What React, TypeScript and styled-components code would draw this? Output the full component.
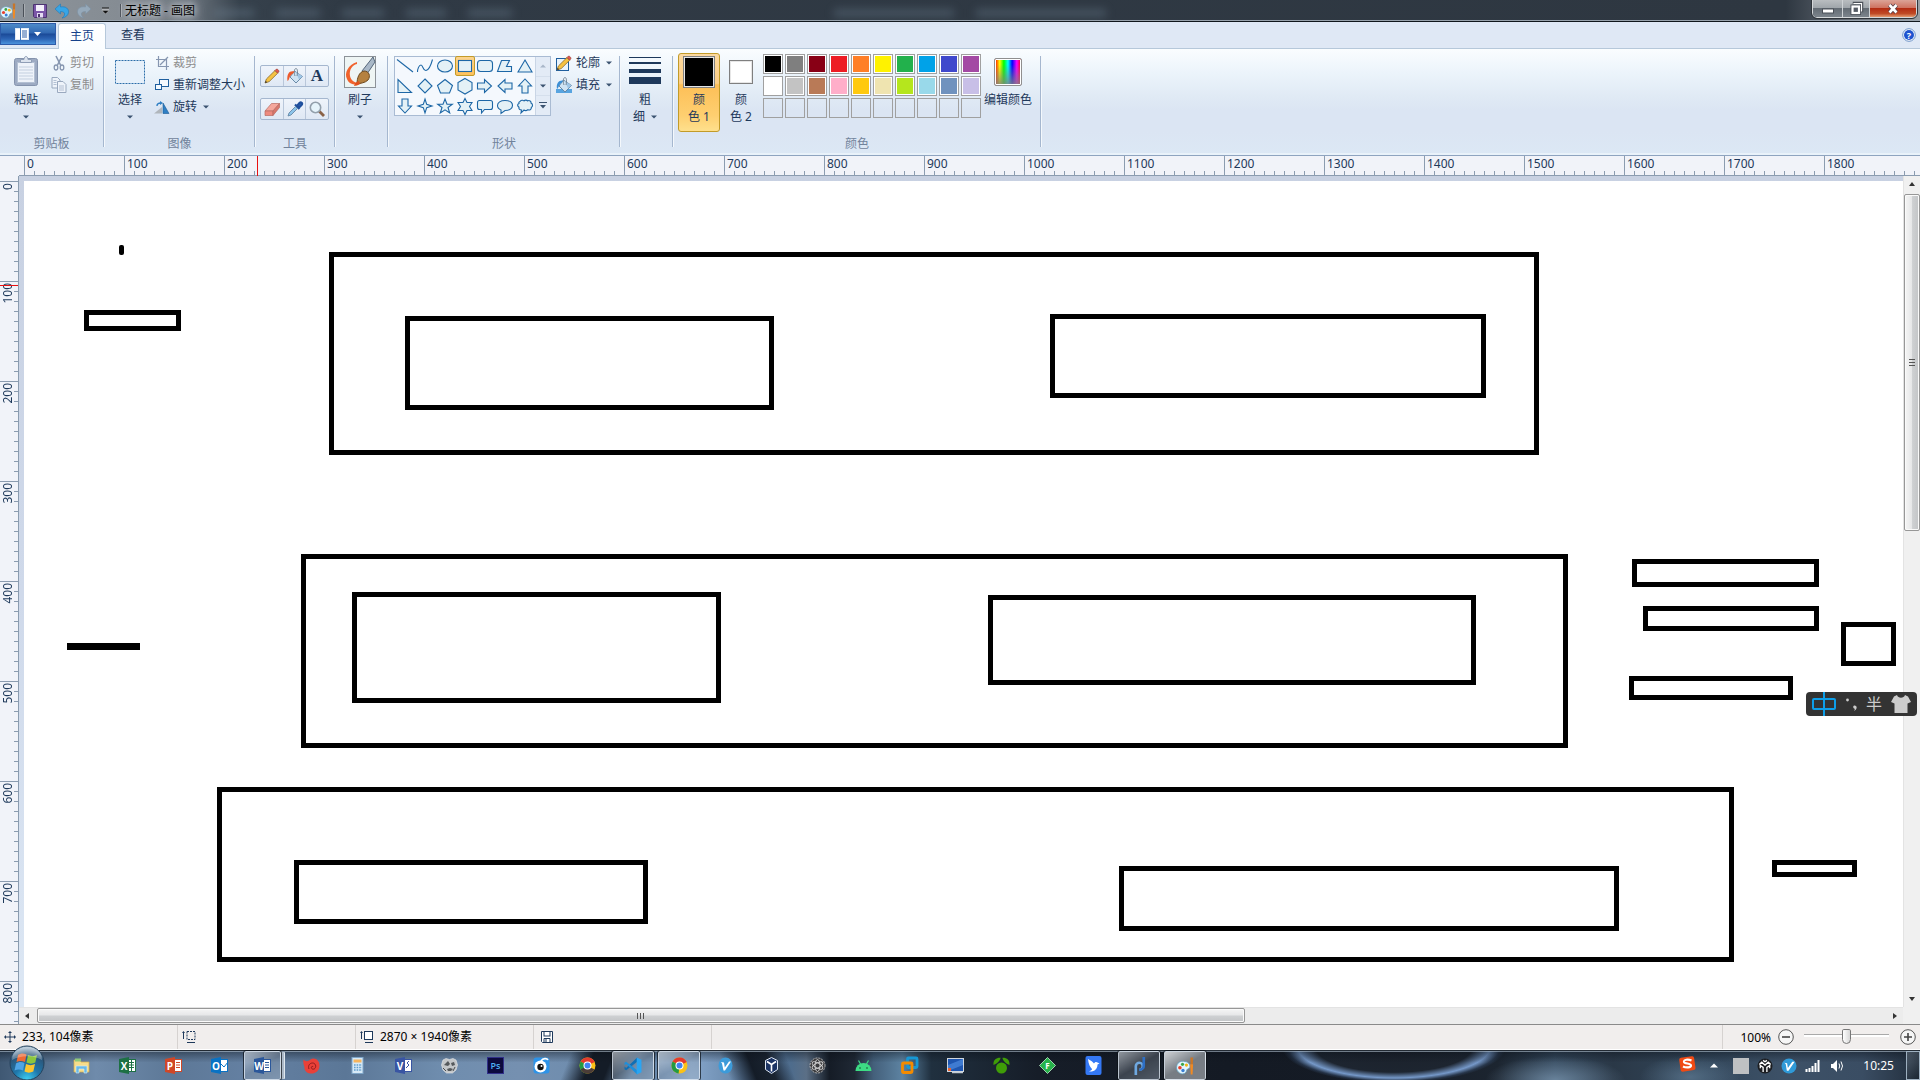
import React, { useEffect, useState } from "react";
import styled, { createGlobalStyle, css } from "styled-components";

const INK = "#1e395b";
const TICK = "#8b9cb0";

const GlobalStyle = createGlobalStyle`
  *, *::before, *::after { box-sizing: border-box; }
  body {
    margin: 0;
    overflow: hidden;
    font-family: "Noto Sans", "Noto Sans CJK SC", sans-serif;
    font-size: 12px;
    color: ${INK};
  }
  button { font: inherit; color: inherit; background: none; border: 0; padding: 0; margin: 0; }
  svg { display: block; flex: none; overflow: visible; }
`;

const Window = styled.div`
  position: relative;
  display: flex;
  flex-direction: column;
  height: 100vh;
  min-height: 480px;
`;

/* ---------- title bar ---------- */

const TitleBar = styled.header`
  position: relative;
  display: flex;
  justify-content: space-between;
  flex: none;
  height: 22px;
  border-bottom: 1px solid #10161c;
  box-shadow: inset 0 -1px 0 #98a2ac;
  background: linear-gradient(90deg, #8d949b 0, #858c93 120px, #6b747d 190px, #36414c 240px, #303a45 340px, #2e3741 93%, #6d747d 97%, #9a9fa4 100%);
`;

const QuickAccess = styled.div`
  display: flex;
  align-items: center;
  height: 21px;
  gap: 7px;
`;

const QuickButton = styled.button`
  display: flex;
  align-items: center;
  justify-content: center;
  width: 15px;
  height: 18px;
`;

const QuickDivider = styled.span`
  width: 2px;
  height: 13px;
  border-left: 1px solid #4a5058;
  border-right: 1px solid #a9aeb3;
`;

const Title = styled.h1`
  margin: 0 0 0 -4px;
  font-size: 12px;
  font-weight: 400;
  line-height: 20px;
  color: #000;
  text-shadow: 0 0 6px #d6dade, 0 0 10px #b9bfc5, 0 0 12px #b9bfc5;
`;

const Reflections = styled.div`
  position: absolute;
  inset: 9px 0 4px 0;
  display: flex;
  gap: 22px;
  padding-left: 214px;
  filter: blur(4px);
  pointer-events: none;
`;

const Reflection = styled.span<{ $w: number; $push?: number }>`
  width: ${(p) => p.$w}px;
  margin-left: ${(p) => p.$push || 0}px;
  background: rgba(126, 148, 170, 0.3);
`;

const Caption = styled.div`
  display: flex;
  height: 18px;
  margin-right: 3px;
  border: 1px solid #d5d8da;
  border-top: 0;
  border-radius: 0 0 5px 5px;
  overflow: hidden;
  outline: 1px solid #30353b;
`;

const CaptionButton = styled.button<{ $w: number; $close?: boolean }>`
  display: flex;
  align-items: center;
  justify-content: center;
  width: ${(p) => p.$w}px;
  border-left: 1px solid #cfd3d6;
  background: ${(p) =>
    p.$close
      ? "linear-gradient(#dba397 0, #cf7361 45%, #b32c13 50%, #c04a25 80%, #e39a70 100%)"
      : "linear-gradient(#b9bdc0 0, #a0a6ab 45%, #646c74 50%, #7c848c 100%)"};
  &:first-child { border-left: 0; }
`;

/* ---------- tabs ---------- */

const TabStrip = styled.nav`
  display: flex;
  align-items: flex-end;
  flex: none;
  height: 27px;
  background: #dfe8f5;
  border-bottom: 1px solid #b6c8da;
`;

const FileButton = styled.button`
  align-self: flex-start;
  display: flex;
  align-items: center;
  justify-content: center;
  gap: 5px;
  width: 56px;
  height: 22px;
  margin: 1px 2px 0 0;
  border: 1px solid #2d5ba9;
  background: linear-gradient(#4d8ac8 0, #3168b2 45%, #1b4a98 50%, #2c64b4 75%, #4b93dc 100%);
`;

const Tab = styled.button<{ $active?: boolean }>`
  width: ${(p) => (p.$active ? 48 : 54)}px;
  height: 25px;
  line-height: 22px;
  padding-bottom: 2px;
  ${(p) =>
    p.$active &&
    css`
      height: 26px;
      margin-bottom: -1px;
      color: #15428b;
      border: 1px solid #b6c8da;
      border-bottom: 0;
      border-radius: 3px 3px 0 0;
      background: linear-gradient(#fff, #fafdff);
    `}
`;

const HelpButton = styled.button`
  margin: 0 4px 6px auto;
`;

/* ---------- ribbon ---------- */

const Ribbon = styled.section`
  display: flex;
  flex: none;
  height: 107px;
  border-bottom: 1px solid #8ea4c0;
  background: linear-gradient(#fafdff 0, #ecf4fb 22%, #e0eaf5 45%, #dbe5f3 58%, #dbe5f3 78%, #dce8f5 100%);
  box-shadow: inset 0 -2px 0 #e9f2fa;
`;

const Group = styled.div<{ $w: number }>`
  display: flex;
  flex-direction: column;
  flex: none;
  width: ${(p) => p.$w}px;
`;

const GroupBody = styled.div<{ $pad?: number; $gap?: number }>`
  display: flex;
  flex: 1;
  align-items: flex-start;
  gap: ${(p) => p.$gap || 0}px;
  padding: 3px 0 0 ${(p) => p.$pad || 0}px;
`;

const GroupLabel = styled.div`
  height: 21px;
  line-height: 20px;
  text-align: center;
  color: #71839b;
`;

const Separator = styled.span`
  flex: none;
  width: 2px;
  margin: 7px 0 8px;
  border-left: 1px solid #a5b7cf;
  border-right: 1px solid #f4f8fc;
`;

const BigButton = styled.button<{ $w: number; $on?: boolean }>`
  display: flex;
  flex-direction: column;
  align-items: center;
  flex: none;
  width: ${(p) => p.$w}px;
  height: 79px;
  margin-top: 1px;
  padding-top: 2px;
  border: 1px solid transparent;
  border-radius: 3px;
  line-height: 17px;
  white-space: nowrap;
  ${(p) =>
    p.$on &&
    css`
      border-color: #c29b29;
      background: linear-gradient(#fcd9a0 0, #fdcf86 38%, #fdbf57 40%, #fecf70 80%, #fee08d 100%);
    `}
`;

const BigIcon = styled.span`
  display: flex;
  align-items: center;
  justify-content: center;
  height: 32px;
  margin-bottom: 3px;
`;

const BigCaption = styled.span`
  display: flex;
  align-items: center;
  justify-content: center;
  gap: 6px;
  height: 17px;
`;

const SmallColumn = styled.div`
  display: flex;
  flex-direction: column;
`;

const SmallButton = styled.button<{ $dim?: boolean }>`
  display: flex;
  align-items: center;
  gap: 4px;
  height: 22px;
  line-height: 22px;
  white-space: nowrap;
  color: ${(p) => (p.$dim ? "#8d8d8d" : INK)};
`;

const SmallIcon = styled.span<{ $wide?: boolean }>`
  display: flex;
  align-items: center;
  justify-content: center;
  width: ${(p) => (p.$wide ? 16 : 14)}px;
  height: 16px;
`;

const CaretBox = styled.span`
  margin-left: 2px;
`;

const ToolRows = styled.div`
  display: flex;
  flex-direction: column;
  gap: 11px;
  padding-top: 13px;
`;

const ToolRow = styled.div`
  display: flex;
  width: 69px;
  height: 22px;
  border: 1px solid #a5b7cf;
  border-radius: 2px;
  background: linear-gradient(#eff4fb, #dfe8f4);
`;

const ToolButton = styled.button`
  display: flex;
  flex: 1;
  align-items: center;
  justify-content: center;
  & + & { border-left: 1px solid #b9c7da; }
`;

const Gallery = styled.div`
  display: flex;
  width: 157px;
  height: 60px;
  margin: 4px 5px 0 0;
  border: 1px solid #a9bbd3;
  background: #f4f8fd;
`;

const ShapeGrid = styled.div`
  display: grid;
  grid-template-columns: repeat(7, 20px);
  grid-auto-rows: 20px;
  flex: 1;
  margin-top: -1px;
`;

const ShapeButton = styled.button<{ $on?: boolean }>`
  display: flex;
  align-items: center;
  justify-content: center;
  ${(p) =>
    p.$on &&
    css`
      border: 1px solid #c29b29;
      border-radius: 2px;
      background: linear-gradient(#fcd48d, #fdc15c);
    `}
`;

const GalleryScroll = styled.div`
  display: flex;
  flex-direction: column;
  width: 15px;
  border-left: 1px solid #c9d5e5;
  background: #e3ebf6;
`;

const GalleryScrollButton = styled.button`
  display: flex;
  flex: 1;
  align-items: center;
  justify-content: center;
  & + & { border-top: 1px solid #d5dfec; }
`;

const LineStack = styled.span`
  display: flex;
  flex-direction: column;
  justify-content: space-between;
  width: 32px;
  height: 27px;
  margin: 1px 0 7px;
`;

const LineSample = styled.span<{ $h: number }>`
  height: ${(p) => p.$h}px;
  background: ${INK};
`;

const CurrentColor = styled.span<{ $size: number; $color: string }>`
  width: ${(p) => p.$size}px;
  height: ${(p) => p.$size}px;
  border: 1px solid #7f7f7f;
  box-shadow: inset 0 0 0 1px #e6e6e6;
  background: ${(p) => p.$color};
`;

const Palette = styled.div`
  display: grid;
  grid-template-columns: repeat(10, 20px);
  grid-auto-rows: 20px;
  gap: 2px;
  padding: 2px 2px 0 1px;
`;

const Swatch = styled.button<{ $color?: string }>`
  border: 1px solid #a0a0a0;
  ${(p) =>
    p.$color &&
    css`
      background: ${p.$color};
      box-shadow: inset 0 0 0 1px #fff;
    `}
`;

const Rainbow = styled.span`
  width: 28px;
  height: 28px;
  border: 1px solid #8f8f8f;
  border-radius: 2px;
  box-shadow: inset 0 0 0 1px #fff;
  background: linear-gradient(rgba(128, 128, 128, 0) 20%, rgba(128, 128, 128, 0.85)),
    linear-gradient(90deg, #f00, #ff0 18%, #0f0 34%, #0ff 50%, #00f 66%, #f0f 84%, #f00);
`;

/* ---------- work area ---------- */

const Work = styled.main`
  display: grid;
  flex: 1;
  min-height: 0;
  grid-template-columns: 19px minmax(0, 1fr) 17px;
  grid-template-rows: 20px minmax(0, 1fr) 17px;
  background: #f0f0f0;
`;

const RulerX = styled.div`
  position: relative;
  grid-column: 1 / -1;
  display: flex;
  overflow: hidden;
  padding-left: 24px;
  background: linear-gradient(${TICK}, ${TICK}) 19px 100% / 100% 1px no-repeat, #f1f3f9;
`;

const SegmentX = styled.div`
  flex: 0 0 100px;
  padding-left: 3px;
  line-height: 16px;
  background:
    linear-gradient(${TICK}, ${TICK}) 0 0 / 1px 100% no-repeat,
    repeating-linear-gradient(90deg, ${TICK} 0 1px, transparent 1px 10px) 0 100% / 100% 5px no-repeat;
`;

const MarkerX = styled.span`
  position: absolute;
  left: 257px;
  top: 0;
  bottom: 0;
  width: 1px;
  background: #e81010;
`;

const RulerY = styled.div`
  position: relative;
  grid-row: 2 / 4;
  overflow: hidden;
  padding-top: 5px;
  border-right: 1px solid ${TICK};
  background: #f1f3f9;
`;

const SegmentY = styled.div`
  height: 100px;
  padding-top: 2px;
  background:
    linear-gradient(${TICK}, ${TICK}) 0 0 / 100% 1px no-repeat,
    repeating-linear-gradient(${TICK} 0 1px, transparent 1px 10px) 100% 0 / 4px 100% no-repeat;
`;

const LabelY = styled.span`
  display: block;
  width: 15px;
  line-height: 15px;
  writing-mode: vertical-rl;
  transform: rotate(180deg);
`;

const MarkerY = styled.span`
  position: absolute;
  top: 109px;
  left: 0;
  right: 0;
  height: 1px;
  background: #e81010;
`;

const Viewport = styled.div`
  overflow: hidden;
  padding: 5px 0 0 5px;
  background: linear-gradient(#c8d1e2, #cfd9ea 50%, #dce7f4);
`;

const Sheet = styled.div`
  position: relative;
  height: 100%;
  background: #fff;
`;

const Stroke = styled.div<{ $box: number[]; $fill?: boolean }>`
  position: absolute;
  left: ${(p) => p.$box[0] - 24}px;
  top: ${(p) => p.$box[1] - 181}px;
  width: ${(p) => p.$box[2] - p.$box[0]}px;
  height: ${(p) => p.$box[3] - p.$box[1]}px;
  border: ${(p) => (p.$fill ? 0 : 5)}px solid #000;
  background: ${(p) => (p.$fill ? "#000" : "transparent")};
`;

const Dot = styled(Stroke)`
  border-radius: 2px;
`;

const ScrollY = styled.div`
  display: flex;
  flex-direction: column;
  border-left: 1px solid #e3e3e3;
  background: #f0f0f0;
`;

const ScrollX = styled.div`
  display: flex;
  border-top: 1px solid #e3e3e3;
  background: #ececec;
`;

const ScrollArrow = styled.button`
  display: flex;
  align-items: center;
  justify-content: center;
  flex: 0 0 16px;
`;

const Track = styled.div<{ $row?: boolean }>`
  display: flex;
  flex: 1;
  flex-direction: ${(p) => (p.$row ? "row" : "column")};
  padding: ${(p) => (p.$row ? "0 0 0 2px" : "2px 0 0")};
`;

const Thumb = styled.div<{ $row?: boolean }>`
  display: flex;
  align-items: center;
  justify-content: center;
  border: 1px solid #979797;
  border-radius: 2px;
  box-shadow: inset 0 0 0 1px #fafafa;
  ${(p) =>
    p.$row
      ? css`
          width: 65.3%;
          height: 15px;
          background: linear-gradient(#f5f5f5 0, #e6e7e8 48%, #cfd1d3 52%, #c2c4c6 100%);
        `
      : css`
          height: 42.3%;
          background: linear-gradient(90deg, #f5f5f5 0, #e6e7e8 48%, #cfd1d3 52%, #c2c4c6 100%);
        `}
`;

/* ---------- status bar ---------- */

const StatusBar = styled.footer`
  display: flex;
  flex: none;
  height: 26px;
  border-top: 1px solid #8a8a8a;
  border-bottom: 1px solid #fff;
  background: #f1eeed;
  color: #000;
`;

const StatusCell = styled.div`
  display: flex;
  align-items: center;
  gap: 6px;
  width: 178px;
  padding-left: 4px;
  border-right: 1px solid #d6d2d0;
  line-height: 22px;
`;

const ZoomCell = styled.div`
  display: flex;
  align-items: center;
  gap: 7px;
  margin-left: auto;
  padding: 0 4px 0 17px;
  border-left: 1px solid #d6d2d0;
`;

const ZoomButton = styled.button`
  display: flex;
`;

const ZoomSlider = styled.input`
  appearance: none;
  width: 85px;
  height: 18px;
  margin: 0 4px 0 3px;
  background: linear-gradient(#a9a9a9, #a9a9a9) 0 6px / 100% 1px no-repeat,
    linear-gradient(#fff, #fff) 0 7px / 100% 2px no-repeat;
  &::-webkit-slider-thumb {
    appearance: none;
    width: 9px;
    height: 15px;
    margin-top: -2px;
    border: 1px solid #777;
    border-radius: 2px 2px 5px 5px;
    background: linear-gradient(90deg, #fff, #d8d8d8);
  }
`;

/* ---------- taskbar ---------- */

const Taskbar = styled.div`
  position: relative;
  display: flex;
  flex: none;
  height: 30px;
  border-top: 1px solid #222a33;
  box-shadow: inset 0 1px 0 rgba(190, 205, 220, 0.55);
  background:
    linear-gradient(rgba(10, 16, 24, 0.45), rgba(10, 16, 24, 0) 40%),
    radial-gradient(ellipse 112px 36px at 72.6% -4px, #1b212b 0, #1d2530 70%, #7598c8 86%, rgba(60, 85, 120, 0.4) 95%, transparent 100%),
    radial-gradient(ellipse 70px 24px at 81% 100%, rgba(122, 150, 176, 0.75), transparent),
    radial-gradient(ellipse 50px 22px at 88% 90%, rgba(104, 134, 160, 0.6), transparent),
    linear-gradient(112deg, transparent 29.600%, #141c27 30.800%, #141c27 31.800%, transparent 33.200%),
    linear-gradient(68deg, transparent 37.800%, #141c27 39.200%, #1a2431 40.200%, transparent 41.200%),
    linear-gradient(90deg,
      #3f5873 0, #6f8bab 5%, #5d7897 9%, #6480a2 13%, #5b7797 18%, #6f8dae 23%, #7590b0 27%,
      #6f8dae 30%, #5f7fa2 33.500%, #86a6cb 36%, #6d8db0 38%, #56769c 40%, #4e6c8c 41.200%, #5b6f86 42%,
      #151c26 43.200%, #1f2834 44.500%, #44607b 45.500%, #5d83a2 47%, #20303f 48.500%,
      #161d28 54%, #141a24 64%, #151b25 72%, #1c2530 78%, #33475b 81%,
      #2a3847 84%, #33475b 89%, #3d5167 93%, #3a4d63 97%, #222e3c 100%);
`;

const StartOrb = styled.button`
  position: relative;
  z-index: 1;
  width: 58px;
  height: 36px;
  margin-top: -6px;
  padding-left: 9px;
`;

const TaskList = styled.div`
  display: flex;
`;

const TaskButton = styled.button<{ $state?: "open" | "front" | "stack" }>`
  display: flex;
  align-items: center;
  justify-content: center;
  width: 42px;
  height: 29px;
  margin: 0 2px;
  ${(p) =>
    p.$state &&
    css`
      border: 1px solid rgba(225, 235, 245, 0.75);
      border-radius: 2px;
      outline: 1px solid rgba(10, 15, 22, 0.7);
      background: ${p.$state === "front"
        ? "linear-gradient(150deg, rgba(240,242,244,.85), rgba(160,166,172,.7) 50%, rgba(190,195,200,.6))"
        : "linear-gradient(150deg, rgba(230,236,242,.6), rgba(150,160,172,.3) 50%, rgba(170,185,200,.4))"};
    `}
  ${(p) =>
    p.$state === "stack" &&
    css`
      width: 37px;
      margin-right: 7px;
      box-shadow: 4px 0 0 -1px rgba(150, 165, 182, 0.7), 5px 0 0 -1px #dfe8f0;
    `}
`;

const Tray = styled.div`
  display: flex;
  align-items: center;
  gap: 8px;
  margin-left: auto;
`;

const TrayButton = styled.button<{ $w?: number }>`
  display: flex;
  align-items: center;
  justify-content: center;
  width: ${(p) => p.$w || 16}px;
  height: 29px;
`;

const Clock = styled.time`
  margin: 0 4px 0 10px;
  line-height: 28px;
  color: #fff;
`;

const ShowDesktop = styled.button`
  width: 14px;
  height: 29px;
  border: 1px solid #9eb0c0;
  background: linear-gradient(135deg, rgba(200, 215, 230, 0.25), rgba(20, 30, 40, 0.55));
`;

const InputBar = styled.aside`
  position: absolute;
  right: 3px;
  top: 692px;
  display: flex;
  align-items: center;
  gap: 9px;
  width: 111px;
  height: 24px;
  padding-left: 6px;
  border-radius: 4px;
  background: #333;
  color: #ccc;
`;

const HalfWidth = styled.span`
  font-size: 16px;
  line-height: 22px;
`;

/* ---------- drawings ---------- */

const Caret = ({ color = "#3b5370" }: { color?: string }) => (
  <svg width="6" height="4" viewBox="0 0 6 4"><path d="M0 0.5h6L3 3.5z" fill={color} /></svg>
);

const Arrow = ({ dir }: { dir: number }) => (
  <svg width="8" height="8" viewBox="0 0 8 8"><path d="M1 6L4 2l3 4z" fill="#333" transform={`rotate(${dir} 4 4)`} /></svg>
);

const PaintIcon = ({ size = 16 }: { size?: number }) => (
  <svg width={size} height={size} viewBox="0 0 16 16">
    <path d="M.5 9.500C.5 5 4 3 8 4c3.500.6 5 3 4.200 5.500-.7 1.200-2 .8-2.500 1.800C9.200 13.500 8 15 6 15 3 15 .5 12.500.5 9.500z" fill="#e3f5fd" stroke="#5f9dbb" strokeWidth=".7" />
    <circle cx="3.500" cy="9.500" r="1.600" fill="#e8412c" /><circle cx="5.800" cy="6.500" r="1.400" fill="#3ba64a" />
    <circle cx="9.300" cy="7.200" r="1.400" fill="#f2b517" /><circle cx="6.200" cy="12" r="1.500" fill="#3a7fd5" />
    <path d="M12.800 0.500l2.400 0-.2 6h-2z" fill="#c7762a" /><path d="M12.600 6.500h2.600l-.5 9h-1.600z" fill="#f08a24" />
  </svg>
);

const PencilShape = () => (
  <>
    <path d="M1 15l1.400-4L11 2.500l2.700 2.700L5.200 13.600z" fill="#f5c242" stroke="#8a6a2c" strokeWidth=".8" />
    <path d="M11 2.500l1.400-1.400c.8-.6 3.100 1.700 2.500 2.600L13.700 5.200z" fill="#e2574c" stroke="#92413a" strokeWidth=".6" />
    <path d="M1 15l.7-2.200 1.500 1.500z" fill="#333" />
  </>
);

const BucketShape = () => (
  <>
    <path d="M7.500 3L15.500 8.500 9 15 3 9z" fill="#cfe3f3" stroke="#5c7f9e" strokeWidth=".9" />
    <path d="M8.500 3.500L15.500 8.500 12 11.500z" fill="#9fc6e6" />
    <path d="M8 8C6.500 4 7.500.5 9 .500S11 4 10 8" fill="none" stroke="#6c7d8c" strokeWidth=".9" />
  </>
);

const TOOL_ICONS: Record<string, React.ReactNode> = {
  铅笔: <PencilShape />,
  用颜色填充: (<><BucketShape /><path d="M7.500 3.500C3 2 -.5 5 .5 13c2-.5 1.500-5.500 5.500-7.500z" fill="#ec5a2d" /></>),
  文本: <text x="8" y="13" textAnchor="middle" fontFamily="Liberation Serif, serif" fontWeight="700" fontSize="17" fill={INK}>A</text>,
  橡皮擦: (<><path d="M1 10L7.500 2.500h8L9 10z" fill="#f5a79c" stroke="#b76a62" strokeWidth=".7" /><path d="M1 10h8v4.500H1z" fill="#ee8a7e" stroke="#b76a62" strokeWidth=".7" /><path d="M9 10L15.500 2.500v4L9 14.500z" fill="#d9776c" stroke="#b76a62" strokeWidth=".7" /></>),
  颜色选取器: (<><path d="M8 3.500l4.500 4.500M10 5l2.500-3c1.500-1.500 3.500.2 2 2L12 6.500z" stroke="#1f4f9c" strokeWidth="2.200" fill="#2f6ac0" /><path d="M8.500 5.500L2 12 1 15 4 14 10.500 7.500z" fill="#8cc4ea" stroke="#5c7f9e" strokeWidth=".8" /></>),
  放大镜: (<><path d="M10 10l5 5" stroke="#8a6247" strokeWidth="2.800" /><circle cx="6.500" cy="6.500" r="5.200" fill="#e6f4fb" stroke="#93a0ac" strokeWidth="1.600" /></>),
};

const SHAPES: [string, React.ReactNode][] = [
  ["直线", <path d="M1 2.500l16 12.500" />],
  ["曲线", <path d="M1.500 15c0-3 1.500-7 3.500-7s2 6 5 5.500S15 8 16.500 2.500" fill="none" />],
  ["椭圆形", <ellipse cx="9" cy="9" rx="7.500" ry="6" />],
  ["矩形", <rect x="2.500" y="3.500" width="13" height="11" />],
  ["圆角矩形", <rect x="1.500" y="3.500" width="15" height="11" rx="3" />],
  ["多边形", <path d="M5.500 3.500h8l-3 6h5v5h-14z" />],
  ["三角形", <path d="M9 3L16 15H2z" />],
  ["直角三角形", <path d="M2 2.500V15.500H15.500z" />],
  ["菱形", <path d="M9 2l7 7-7 7-7-7z" />],
  ["五边形", <path d="M9 2.500L16.500 8.500 13.500 16h-9L1.500 8.500z" />],
  ["六边形", <path d="M9 1.500l7 4v7.500l-7 4-7-4V5.500z" />],
  ["右箭头", <path d="M1.500 6h7V2.500L15.500 9l-7 6.500V12h-7z" />],
  ["左箭头", <path d="M16 6H9V2.500L2 9l7 6.500V12h7z" />],
  ["上箭头", <path d="M6 16V9H2.500L9 2l6.500 7H12v7z" />],
  ["下箭头", <path d="M6 2v7H2.500L9 16l6.500-7H12V2z" />],
  ["四角星形", <path d="M9 2l1.700 5.300L16 9l-5.300 1.700L9 16l-1.700-5.300L2 9l5.300-1.700z" />],
  ["五角星形", <path d="M9 2l2 5.200h5.300L12 10.500l1.700 5.500L9 12.800 4.300 16 6 10.500 1.700 7.200H7z" />],
  ["六角星形", <path d="M9 1.500l2 4h5L13.500 9.500l2.500 4h-5l-2 4-2-4H2l2.500-4L2 5.500h5z" />],
  ["圆角矩形标注", <path d="M3.500 3.500h11q2 0 2 2v5q0 2-2 2H8.500L5.500 16v-3.500h-2q-2 0-2-2v-5q0-2 2-2z" />],
  ["椭圆形标注", <path d="M9 3.500c4.500 0 7.500 2 7.500 5s-3 5-7.500 5L5 16.500v-3.500C3 12.200 1.500 10.500 1.500 8.500c0-3 3-5 7.500-5z" />],
  ["云形标注", <path d="M4 4.500c1.500-2 3.500-1 4-.6 1-1.200 3-.8 3.500 0 2-1 4 .6 3.500 2.100 2 1 2 3.500.3 4.500.3 2-2 3-3.300 2.200-1 1.200-3 1.200-4 .3L5 16l.5-3c-2 0-3-1.500-2.500-2.800C1 9 1.300 7 3 6.500c-.4-.8 0-1.600 1-2z" />],
];

const COLORS = [
  "#000", "#7f7f7f", "#880015", "#ed1c24", "#ff7f27", "#fff200", "#22b14c", "#00a2e8", "#3f48cc", "#a349a4",
  "#fff", "#c3c3c3", "#b97a57", "#ffaec9", "#ffc90e", "#efe4b0", "#b5e61d", "#99d9ea", "#7092be", "#c8bfe7",
];

const STROKES = [
  [84, 310, 181, 331],
  [329, 252, 1539, 455], [405, 316, 774, 410], [1050, 314, 1486, 398],
  [301, 554, 1568, 748], [352, 592, 721, 703], [988, 595, 1476, 685],
  [217, 787, 1734, 962], [294, 860, 648, 924], [1119, 866, 1619, 931],
  [1632, 559, 1819, 587], [1643, 606, 1819, 631], [1841, 622, 1896, 666],
  [1629, 676, 1793, 700], [1772, 860, 1857, 877],
];

const OfficeTile = ({ color, letter, page }: { color: string; letter: string; page?: string }) => (
  <svg width="17" height="17" viewBox="0 0 17 17">
    <rect x="8" y="2.500" width="8.500" height="12" fill="#fff" stroke={color} />
    <path d={page || "M11 5.500h4M11 8h4M11 10.500h4"} stroke={color} fill="none" />
    <path d="M0 2L10 0v17L0 15z" fill={color} />
    <text x="5" y="12.500" textAnchor="middle" fontFamily="Open Sans, sans-serif" fontWeight="700" fontSize="10" fill="#fff">{letter}</text>
  </svg>
);

const ChromeIcon = ({ dark }: { dark?: boolean }) => (
  <svg width="17" height="17" viewBox="0 0 17 17">
    <circle cx="8.500" cy="8.500" r="8" fill="#fbc116" />
    <path d="M8.500 8.500L1.600 4.500A8 8 0 0 1 15.800 5z" fill="#e33b2e" />
    <path d="M8.500 8.500L1.600 4.500a8 8 0 0 0 6 12z" fill="#249a42" />
    {dark && <path d="M1.500 12.500a8 8 0 0 0 14 0l-4-2h-6z" fill="#4a3c38" />}
    <circle cx="8.500" cy="8.500" r="4" fill="#fff" /><circle cx="8.500" cy="8.500" r="3" fill="#4083f0" />
  </svg>
);

const Icon = ({ children, size = 17 }: { children: React.ReactNode; size?: number }) => (
  <svg width={size} height={size} viewBox="0 0 17 17">{children}</svg>
);

const TASKS: { name: string; state?: "open" | "front" | "stack"; icon: React.ReactNode }[] = [
  { name: "资源管理器", icon: <Icon><path d="M1 3h6l1 2h8v10H1z" fill="#f6dd8b" stroke="#d2ac4b" strokeWidth=".7" /><path d="M2 1.500h6v3H2z" fill="#8ec97a" /><path d="M3 16V9h11v7h-3v-4H6v4z" fill="#69b9e6" stroke="#d9effa" strokeWidth=".6" /></Icon> },
  { name: "Excel", icon: <OfficeTile color="#1d7044" letter="X" page="M10 5.500h5M10 8h5M10 10.500h5M12.500 3v11" /> },
  { name: "PowerPoint", icon: <OfficeTile color="#d04727" letter="P" /> },
  { name: "Outlook", icon: <OfficeTile color="#0872c4" letter="O" page="M10 7l3 3 4-5" /> },
  { name: "Word", state: "stack", icon: <OfficeTile color="#2b579a" letter="W" /> },
  { name: "海螺", icon: <Icon><path d="M.5 2.500C3 5 5 4.500 7.500 2.500c4-2.500 9 .5 9 6s-4.500 8.500-9 8C3 16 1 12.500 1.500 10 .5 8 0 5 .5 2.500z" fill="#ea4038" /><path d="M6 12c-1.500-3.500 1-6 3.500-6 3 0 4 3.500 2.500 5.300-1.500 1.700-4 .7-3.600-1.100.3-1 1.600-1 1.800-.2" fill="none" stroke="#8e1a1c" strokeWidth="1" /></Icon> },
  { name: "计算器", icon: <Icon><rect x="3" y=".5" width="11" height="16" fill="#d7eaf8" stroke="#7fa6c9" /><rect x="4.500" y="2.500" width="8" height="3" fill="#f6b45c" /><path d="M5 8h8M5 10.500h8M5 13h8" stroke="#5e9ccb" strokeWidth="1.500" strokeDasharray="1.600 1" /></Icon> },
  { name: "Visio", icon: <OfficeTile color="#3955a3" letter="V" page="M11 11l3-3-2-2 2-2" /> },
  { name: "狮子", icon: <Icon><path d="M2 3l3-1.500 3.500 1L12 1.500 15 3l1.500 5-1.500 5-3.500 3h-6L2 13 .5 8z" fill="#c4c7c9" stroke="#e8eaeb" strokeWidth=".6" /><path d="M3 5l3-2M7 4l2 3-2 2-4-1zM10 6l3-1 1 3-3 1zM6 12l3-1 3 1-2 2-3 0z" fill="#55595c" /><path d="M2 11l3 3M14 10l-2 4" stroke="#4a4d50" /></Icon> },
  { name: "Photoshop", icon: <Icon><rect x=".5" y=".5" width="16" height="16" fill="#0c0a3e" stroke="#31308a" /><text x="8.500" y="12" textAnchor="middle" fontFamily="Open Sans, sans-serif" fontWeight="600" fontSize="9" fill="#4fb1f5">Ps</text></Icon> },
  { name: "看图", icon: <Icon><rect x=".5" y=".5" width="16" height="16" rx="3" fill="#2d93e8" /><circle cx="7.500" cy="9.500" r="6" fill="#fff" /><circle cx="7.500" cy="10" r="3.200" fill="#111" /><circle cx="8.500" cy="9" r="1" fill="#fff" /><path d="M8 4c2-3 6-3 7-1" stroke="#fff" strokeWidth="1.600" fill="none" /></Icon> },
  { name: "浏览器", icon: <ChromeIcon dark /> },
  { name: "Visual Studio Code", state: "open", icon: <Icon size={18}><path d="M12.500.5L2 10.300.5 9v2.500L2 12.500 12.500 4.500z" fill="#0f6fb5" /><path d="M12.500 16.500L2 6.700.5 8V5.500L2 4.500l10.500 8z" fill="#1d8fdb" /><path d="M12 .5l4.500 2v12L12 16.500z" fill="#2aa5f2" /></Icon> },
  { name: "Chrome", state: "open", icon: <ChromeIcon /> },
  { name: "V 客户端", icon: <Icon><ellipse cx="8.500" cy="8.500" rx="7" ry="8" fill="#3c9bd9" /><path d="M4 5l3 .5.8 5L12 4.500h2L8 13.500H6.500L5 6.500z" fill="#fff" /></Icon> },
  { name: "VirtualBox", icon: <Icon><path d="M8.500.5l6 3v9l-6 4-6-4v-9z" fill="#1c3464" stroke="#dfe8f5" /><path d="M4 4.500l4.500 3 4.500-3M8.500 7.500v7" stroke="#fff" strokeWidth="1.600" fill="none" /></Icon> },
  { name: "齿轮", icon: <Icon><circle cx="8.500" cy="8.500" r="7.500" fill="#3b3b3d" stroke="#b9b9b9" strokeDasharray="2 1" /><g fill="none" stroke="#d5d5d5" strokeWidth=".9"><ellipse cx="8.500" cy="8.500" rx="2.500" ry="6" /><ellipse cx="8.500" cy="8.500" rx="2.500" ry="6" transform="rotate(60 8.500 8.500)" /><ellipse cx="8.500" cy="8.500" rx="2.500" ry="6" transform="rotate(120 8.500 8.500)" /></g></Icon> },
  { name: "Android", icon: <Icon><path d="M.5 14a8 8 0 0 1 16 0z" fill="#3ddc84" /><path d="M3.500 3.500L5.500 7M13.500 3.500L11.500 7" stroke="#3ddc84" strokeWidth="1.200" /><circle cx="5" cy="11" r=".8" fill="#134a2c" /><circle cx="12" cy="11" r=".8" fill="#134a2c" /></Icon> },
  { name: "VMware", icon: <Icon><rect x="6.500" y="1" width="9.500" height="9.500" rx="1" fill="none" stroke="#1698d5" strokeWidth="2.800" /><rect x="1.500" y="6" width="9.500" height="9.500" rx="1" fill="none" stroke="#f38b00" strokeWidth="2.800" /></Icon> },
  { name: "远程桌面", icon: <Icon><rect x=".5" y="1.500" width="16" height="13" fill="#1e56b0" stroke="#cfd6dd" /><path d="M1 8L16 2v6L1 14z" fill="#4d8be0" opacity=".7" /><rect x="1" y="11" width="3" height="3" fill="#e8602c" /><path d="M5 15.500h11" stroke="#c4ccd4" strokeWidth="1.500" /></Icon> },
  { name: "绿豆", icon: <Icon><circle cx="8.500" cy="11" r="5.500" fill="#3f9d08" /><path d="M.5 8C0 3 3.500.5 7.500.8 7.500 3 5 6.500.5 8zM16.500 8C17 3 13.500.5 9.500.8c0 2.200 2.500 5.700 7 7.200z" fill="#3f9d08" /></Icon> },
  { name: "F 工具", icon: <Icon><path d="M8.500.5l8 8-8 8-8-8z" fill="#27b24b" stroke="#bfeccb" strokeWidth=".8" /><text x="8.500" y="11.500" textAnchor="middle" fontFamily="Open Sans, sans-serif" fontWeight="700" fontSize="8" fill="#fff">F</text></Icon> },
  { name: "飞鸟", icon: <Icon><rect x=".5" y="-1" width="16" height="19" rx="2" fill="#3478f5" /><path d="M3 2c3 1.500 5 3 6 4.500.5-1.500 2.500-2 3.500-1l2 1-2 1c0 4.500-3 7.500-8.500 7 2-1 3-1.500 3-2.500C5 10 3.500 7 3 2z" fill="#fff" /></Icon> },
  { name: "pd", state: "open", icon: <Icon size={18}><path d="M5.500 17V8.500a3.300 3.300 0 1 1 3.300 3.500" fill="none" stroke="#6fa8e0" strokeWidth="2.500" /><path d="M13 0v8a3.800 3.800 0 0 1-4.200 4" fill="none" stroke="#2e6fc4" strokeWidth="2.500" /></Icon> },
  { name: "画图", state: "front", icon: <PaintIcon size={18} /> },
];

const range = (n: number) => Array.from({ length: Math.max(0, n) }, (_, i) => i);

/* Ruler segments needed to reach the right and bottom edges of the window. */
function useRulerCounts() {
  const measure = () => ({
    x: Math.ceil((window.innerWidth - 24) / 100),
    y: Math.ceil((window.innerHeight - 237) / 100),
  });
  const [counts, setCounts] = useState(measure);
  useEffect(() => {
    const update = () => setCounts(measure());
    window.addEventListener("resize", update);
    return () => window.removeEventListener("resize", update);
  }, []);
  return counts;
}

export default function App() {
  const ruler = useRulerCounts();
  return (
    <Window>
      <GlobalStyle />
      <TitleBar>
        <Reflections aria-hidden="true">
          {[40, 44, 42, 40, 44].map((w, i) => <Reflection key={i} $w={w} />)}
          <Reflection $w={120} $push={300} />
          <Reflection $w={130} />
        </Reflections>
        <QuickAccess>
          <PaintIcon />
          <QuickDivider />
          <QuickButton aria-label="保存">
            <svg width="14" height="14" viewBox="0 0 14 14"><path d="M.5.500h13v13H1.500l-1-1z" fill="#7b57a8" stroke="#4c3470" /><rect x="3" y="1" width="8" height="6" fill="#f3effa" /><rect x="4" y="9" width="6" height="4.500" fill="#e5dcf3" /><rect x="5" y="10" width="2" height="3" fill="#4c3470" /></svg>
          </QuickButton>
          <QuickButton aria-label="撤消">
            <svg width="14" height="14" viewBox="0 0 14 14"><path d="M0 5L5.500 0v3C11 2 14 5 13.500 8.500 13 11.500 10.500 13.500 7 14c3-2 4.500-6.500-1.500-6.500V10z" fill="#38a5e6" stroke="#1c78b8" strokeWidth=".6" /></svg>
          </QuickButton>
          <QuickButton aria-label="重做">
            <svg width="14" height="14" viewBox="0 0 14 14"><path d="M14 5L8.500 0v3C3 2 0 5 .5 8.500 1 11.500 3.500 13.500 7 14c-3-2-4.500-6.500 1.500-6.500V10z" fill="#96a9ba" stroke="#7c90a2" strokeWidth=".6" /></svg>
          </QuickButton>
          <QuickButton aria-label="自定义快速访问工具栏">
            <svg width="7" height="8" viewBox="0 0 7 8"><path d="M0 2h7" stroke="#ddd" /><path d="M0 1h7" stroke="#111" /><path d="M0 3.500h7L3.500 7z" fill="#111" stroke="#ddd" strokeWidth=".4" /></svg>
          </QuickButton>
          <QuickDivider />
          <Title>无标题 - 画图</Title>
        </QuickAccess>
        <Caption>
          <CaptionButton $w={29} aria-label="最小化">
            <svg width="12" height="12" viewBox="0 0 12 12"><rect x=".5" y="6" width="11" height="4" fill="#fff" stroke="#4b5058" /></svg>
          </CaptionButton>
          <CaptionButton $w={27} aria-label="还原">
            <svg width="13" height="13" viewBox="0 0 13 13"><path d="M4 3V1h8v8h-2" fill="none" stroke="#4b5058" strokeWidth="2.500" /><path d="M4 2.500V1.500h7.500V9H10" fill="none" stroke="#fff" strokeWidth="1.200" /><rect x="2.500" y="4.500" width="6.500" height="6.500" fill="#555b64" stroke="#4b5058" strokeWidth="4" /><rect x="2.500" y="4.500" width="6.500" height="6.500" fill="#555b64" stroke="#fff" strokeWidth="2.200" /></svg>
          </CaptionButton>
          <CaptionButton $w={47} $close aria-label="关闭">
            <svg width="12" height="12" viewBox="0 0 12 12"><path d="M2.500 2l7 7.500M9.500 2l-7 7.500" stroke="#55404a" strokeWidth="4.200" /><path d="M2.500 2l7 7.500M9.500 2l-7 7.500" stroke="#fff" strokeWidth="2.600" /></svg>
          </CaptionButton>
        </Caption>
      </TitleBar>

      <TabStrip>
        <FileButton aria-label="文件">
          <svg width="14" height="12" viewBox="0 0 14 12"><rect x=".5" y=".5" width="13" height="11" fill="#fff" stroke="#dfe9f5" /><path d="M5.500 0v12" stroke="#3f74ba" strokeWidth="1" /><path d="M7 3h5M7 5h5M7 7h5M7 9h5" stroke="#2c5fa8" /></svg>
          <svg width="7" height="4" viewBox="0 0 7 4"><path d="M0 0h7L3.500 4z" fill="#fff" /></svg>
        </FileButton>
        <Tab $active>主页</Tab>
        <Tab>查看</Tab>
        <HelpButton aria-label="帮助">
          <svg width="14" height="14" viewBox="0 0 14 14"><circle cx="7" cy="7" r="6.300" fill="#fff" stroke="#6d93c8" /><circle cx="7" cy="7" r="5" fill="#1f53cf" /><text x="7" y="10.500" textAnchor="middle" fontFamily="Open Sans, sans-serif" fontWeight="700" fontSize="9" fill="#fff">?</text></svg>
        </HelpButton>
      </TabStrip>

      <Ribbon>
        <Group $w={103}>
          <GroupBody $pad={5} $gap={5}>
            <BigButton $w={42}>
              <BigIcon>
                <svg width="26" height="32" viewBox="0 0 26 32"><rect x="1.500" y="2.500" width="23" height="27" rx="2" fill="#9dabc3" stroke="#8493ad" /><rect x="4.500" y="6.500" width="17" height="20" fill="#eef3fa" stroke="#b3c0d3" /><path d="M6 11h14M6 14h14M6 17h14M6 20h14M6 23h14" stroke="#c3cfdf" /><path d="M7.500 6.500V3.500h3.500c0-4 4-4 4 0h3.500v3z" fill="#dbe3ee" stroke="#8f9eb6" /></svg>
              </BigIcon>
              <BigCaption>粘贴</BigCaption>
              <BigCaption><Caret /></BigCaption>
            </BigButton>
            <SmallColumn>
              <SmallButton $dim>
                <SmallIcon><svg width="12" height="16" viewBox="0 0 12 16"><path d="M3 1l4.500 9M9 1L4.500 10" stroke="#8696b0" strokeWidth="1.600" /><ellipse cx="3" cy="12.500" rx="1.800" ry="2.500" fill="none" stroke="#8696b0" strokeWidth="1.300" /><ellipse cx="9" cy="12.500" rx="1.800" ry="2.500" fill="none" stroke="#8696b0" strokeWidth="1.300" /></svg></SmallIcon>
                剪切
              </SmallButton>
              <SmallButton $dim>
                <SmallIcon><svg width="16" height="16" viewBox="0 0 16 16"><path d="M1 .5h5.500L9 3v8H1z" fill="#eef3fa" stroke="#9aa9bf" /><path d="M6.500 4.500H12L15 7.500v8H6.500z" fill="#eef3fa" stroke="#9aa9bf" /><path d="M8 9h5M8 11h5M8 13h5M2.500 3.500h3M2.500 5.500h3M2.500 7.500h3" stroke="#b3c0d3" /></svg></SmallIcon>
                复制
              </SmallButton>
            </SmallColumn>
          </GroupBody>
          <GroupLabel>剪贴板</GroupLabel>
        </Group>
        <Separator />
        <Group $w={149}>
          <GroupBody $pad={4} $gap={4}>
            <BigButton $w={42}>
              <BigIcon><svg width="30" height="24" viewBox="0 0 30 24"><rect x=".5" y=".5" width="29" height="23" fill="#e6f0fa" stroke="#2a6da8" strokeDasharray="2 1" /></svg></BigIcon>
              <BigCaption>选择</BigCaption>
              <BigCaption><Caret /></BigCaption>
            </BigButton>
            <SmallColumn>
              <SmallButton $dim>
                <SmallIcon><svg width="13" height="14" viewBox="0 0 13 14"><path d="M2.500 0v10.500H13M0 3.500h10.500V14M4 9l8-8" fill="none" stroke="#8696b0" strokeWidth="1.200" /></svg></SmallIcon>
                裁剪
              </SmallButton>
              <SmallButton>
                <SmallIcon><svg width="14" height="14" viewBox="0 0 14 14"><rect x="4.500" y="1.500" width="9" height="7" fill="#f4f9fe" stroke="#1f5f9e" /><rect x=".5" y="6.500" width="6" height="5" fill="#f4f9fe" stroke="#1f5f9e" /></svg></SmallIcon>
                重新调整大小
              </SmallButton>
              <SmallButton>
                <SmallIcon><svg width="16" height="13" viewBox="0 0 16 13"><path d="M0 12.500L8 6v6.500z" fill="#b0b6bc" /><path d="M9 12.500V2l6 10.500z" fill="#2f7fc4" stroke="#1a5a96" strokeWidth=".6" /><path d="M3 5c0-2 1-3 4-3" stroke="#2f7fc4" strokeWidth="1.400" fill="none" /><path d="M6 0l3 2-3 2z" fill="#2f7fc4" /></svg></SmallIcon>
                旋转
                <CaretBox><Caret /></CaretBox>
              </SmallButton>
            </SmallColumn>
          </GroupBody>
          <GroupLabel>图像</GroupLabel>
        </Group>
        <Separator />
        <Group $w={78}>
          <GroupBody $pad={4}>
            <ToolRows>
              {[["铅笔", "用颜色填充", "文本"], ["橡皮擦", "颜色选取器", "放大镜"]].map((row) => (
                <ToolRow key={row[0]}>
                  {row.map((name) => (
                    <ToolButton key={name} aria-label={name}>
                      <svg width="16" height="16" viewBox="0 0 16 16">{TOOL_ICONS[name]}</svg>
                    </ToolButton>
                  ))}
                </ToolRow>
              ))}
            </ToolRows>
          </GroupBody>
          <GroupLabel>工具</GroupLabel>
        </Group>
        <Separator />
        <Group $w={51}>
          <GroupBody $pad={3}>
            <BigButton $w={42}>
              <BigIcon>
                <svg width="32" height="32" viewBox="0 0 32 32"><rect x=".5" y=".5" width="31" height="31" fill="#eef5f4" stroke="#8c9298" /><path d="M13 6C4 9 0 17 3 23c2 6 10 7 15 4-6 1-11-2-12-7C5 14 8 9 13 8z" fill="#f0622c" /><path d="M29 1l2 5-8 12-5-3z" fill="#a9b9c8" stroke="#55677a" /><path d="M13 28c0-6 2-12 7-13 5 0 7 5 4 9-3 3-7 3-11 4z" fill="#b5813f" stroke="#6d4a1f" /><path d="M10 30c1-3 2-4 5-5l1 3c-2 1-4 2-6 2z" fill="#e2501c" /></svg>
              </BigIcon>
              <BigCaption>刷子</BigCaption>
              <BigCaption><Caret /></BigCaption>
            </BigButton>
          </GroupBody>
          <GroupLabel />
        </Group>
        <Separator />
        <Group $w={230}>
          <GroupBody $pad={5}>
            <Gallery>
              <ShapeGrid>
                {SHAPES.map(([name, shape], i) => (
                  <ShapeButton key={name} aria-label={name} $on={i === 3}>
                    <svg width="18" height="18" viewBox="0 0 18 18" fill="#e4f1f6" stroke="#1d67a6" strokeWidth="1.100">{shape}</svg>
                  </ShapeButton>
                ))}
              </ShapeGrid>
              <GalleryScroll>
                <GalleryScrollButton aria-label="上一行"><svg width="6" height="4" viewBox="0 0 6 4"><path d="M0 3.500h6L3 .5z" fill="#a9b7c9" /></svg></GalleryScrollButton>
                <GalleryScrollButton aria-label="下一行"><Caret /></GalleryScrollButton>
                <GalleryScrollButton aria-label="更多"><svg width="8" height="7" viewBox="0 0 8 7"><path d="M0 .5h8" stroke="#3b5370" /><path d="M1 3h6L4 6.500z" fill="#3b5370" /></svg></GalleryScrollButton>
              </GalleryScroll>
            </Gallery>
            <SmallColumn>
              <SmallButton>
                <SmallIcon $wide><svg width="16" height="16" viewBox="0 0 16 16"><rect x=".5" y="3.500" width="12" height="12" fill="#eaf4fb" stroke="#1f5f9e" /><PencilShape /></svg></SmallIcon>
                轮廓
                <CaretBox><Caret /></CaretBox>
              </SmallButton>
              <SmallButton>
                <SmallIcon $wide><svg width="16" height="16" viewBox="0 0 16 16"><path d="M0 12h16v4H0z" fill="#57a4e0" /><BucketShape /><path d="M7 3.500C3 3 0 6 1 12c2-1 1.500-4.500 5-6.500z" fill="#3b8fd6" /></svg></SmallIcon>
                填充
                <CaretBox><Caret /></CaretBox>
              </SmallButton>
            </SmallColumn>
          </GroupBody>
          <GroupLabel>形状</GroupLabel>
        </Group>
        <Separator />
        <Group $w={51}>
          <GroupBody $pad={3}>
            <BigButton $w={42}>
              <LineStack>
                {[1, 2, 4, 7].map((h) => <LineSample key={h} $h={h} />)}
              </LineStack>
              <BigCaption>粗</BigCaption>
              <BigCaption>细<Caret /></BigCaption>
            </BigButton>
          </GroupBody>
          <GroupLabel />
        </Group>
        <Separator />
        <Group $w={366}>
          <GroupBody $pad={4}>
            <BigButton $w={42} $on>
              <BigIcon><CurrentColor $size={32} $color="#000" /></BigIcon>
              <BigCaption>颜</BigCaption>
              <BigCaption>色 1</BigCaption>
            </BigButton>
            <BigButton $w={42}>
              <BigIcon><CurrentColor $size={24} $color="#fff" /></BigIcon>
              <BigCaption>颜</BigCaption>
              <BigCaption>色 2</BigCaption>
            </BigButton>
            <Palette>
              {range(30).map((i) => <Swatch key={i} $color={COLORS[i]} aria-label={COLORS[i] || "空"} />)}
            </Palette>
            <BigButton $w={50}>
              <BigIcon><Rainbow /></BigIcon>
              <BigCaption>编辑颜色</BigCaption>
            </BigButton>
          </GroupBody>
          <GroupLabel>颜色</GroupLabel>
        </Group>
        <Separator />
      </Ribbon>

      <Work>
        <RulerX>
          {range(ruler.x).map((i) => <SegmentX key={i}>{i * 100}</SegmentX>)}
          <MarkerX />
        </RulerX>
        <RulerY>
          {range(ruler.y).map((i) => <SegmentY key={i}><LabelY>{i * 100}</LabelY></SegmentY>)}
          <MarkerY />
        </RulerY>
        <Viewport>
          <Sheet>
            <Dot $box={[119, 245, 124, 255]} $fill />
            <Stroke $box={[67, 643, 140, 650]} $fill />
            {STROKES.map((box) => <Stroke key={box.join()} $box={box} />)}
          </Sheet>
        </Viewport>
        <ScrollY>
          <ScrollArrow aria-label="向上"><Arrow dir={0} /></ScrollArrow>
          <Track>
            <Thumb><svg width="8" height="8" viewBox="0 0 8 8"><path d="M1 .5h6M1 3.500h6M1 6.500h6" stroke="#555" /></svg></Thumb>
          </Track>
          <ScrollArrow aria-label="向下"><Arrow dir={180} /></ScrollArrow>
        </ScrollY>
        <ScrollX>
          <ScrollArrow aria-label="向左"><Arrow dir={-90} /></ScrollArrow>
          <Track $row>
            <Thumb $row><svg width="8" height="8" viewBox="0 0 8 8"><path d="M.5 1v6M3.500 1v6M6.500 1v6" stroke="#555" /></svg></Thumb>
          </Track>
          <ScrollArrow aria-label="向右"><Arrow dir={90} /></ScrollArrow>
        </ScrollX>
      </Work>

      <StatusBar>
        <StatusCell>
          <svg width="12" height="12" viewBox="0 0 12 12"><path d="M6 1v10M1 6h10" stroke={INK} /><path d="M6 0l2 2H4zM6 12l2-2H4zM0 6l2-2v4zM12 6l-2-2v4z" fill={INK} /></svg>
          233, 104像素
        </StatusCell>
        <StatusCell>
          <svg width="15" height="14" viewBox="0 0 15 14"><path d="M1.500 2v7M5 12.500h8" stroke={INK} /><path d="M0 3l1.500-2L3 3z" fill={INK} /><rect x="5" y="1.500" width="8" height="8" fill="none" stroke={INK} strokeDasharray="2 1" /></svg>
        </StatusCell>
        <StatusCell>
          <svg width="14" height="14" viewBox="0 0 14 14"><path d="M1.500 2v7M5 12.500h8" stroke={INK} /><path d="M0 3l1.500-2L3 3z" fill={INK} /><rect x="4.500" y="1.500" width="8" height="8" fill="#fff" stroke={INK} /></svg>
          2870 × 1940像素
        </StatusCell>
        <StatusCell>
          <svg width="16" height="12" viewBox="0 0 16 12"><path d="M3.500.500h11v11h-10l-1-1z" fill="#fff" stroke={INK} /><rect x="6" y=".500" width="6" height="4.500" fill="none" stroke={INK} /><path d="M6 11V7.500h6V11M8 8v3" fill="none" stroke={INK} /></svg>
        </StatusCell>
        <ZoomCell>
          <label htmlFor="zoom">100%</label>
          <ZoomButton aria-label="缩小"><svg width="16" height="16" viewBox="0 0 16 16"><circle cx="8" cy="8" r="7.300" fill="#f6f6f6" stroke="#555" /><path d="M4 8h8" stroke="#444" strokeWidth="1.600" /></svg></ZoomButton>
          <ZoomSlider id="zoom" type="range" min="0" max="100" defaultValue="50" />
          <ZoomButton aria-label="放大"><svg width="16" height="16" viewBox="0 0 16 16"><circle cx="8" cy="8" r="7.300" fill="#f6f6f6" stroke="#555" /><path d="M4 8h8M8 4v8" stroke="#444" strokeWidth="1.600" /></svg></ZoomButton>
        </ZoomCell>
      </StatusBar>

      <Taskbar>
        <StartOrb aria-label="开始">
          <svg width="36" height="36" viewBox="0 0 36 36">
            <defs>
              <radialGradient id="orb" cx=".5" cy="1" r=".95"><stop offset="0" stopColor="#3fd3f5" /><stop offset=".4" stopColor="#1f78ac" /><stop offset=".8" stopColor="#2c5578" /><stop offset="1" stopColor="#a9bfd0" /></radialGradient>
            </defs>
            <circle cx="18" cy="18" r="17" fill="url(#orb)" stroke="#24425c" />
            <path d="M9 10c3-2 5.500-2 8.500-.5l-1.500 7.500c-3-1.500-5.500-1.500-8.500 0z" fill="#ee6a34" />
            <path d="M19 10c3 1.500 6 1.500 9 0l-1.700 7.500c-3 1.500-5.800 1.500-8.800 0z" fill="#8cc63e" />
            <path d="M7 18.500c3-2 5.500-2 8.500-.500L14 25.500c-3-1.500-5.500-1.500-8.500 0z" fill="#4fa4e4" />
            <path d="M17 19c3 1.500 6 1.500 9 0l-1.700 7.500c-3 1.500-5.800 1.500-8.800 0z" fill="#fbc52f" />
            <path d="M3 15a15 13 0 0 1 30 0c-9-5-21-5-30 0z" fill="#fff" opacity=".28" />
          </svg>
        </StartOrb>
        <TaskList>
          {TASKS.map((t) => <TaskButton key={t.name} $state={t.state} aria-label={t.name}>{t.icon}</TaskButton>)}
        </TaskList>
        <Tray>
          <TrayButton aria-label="搜狗输入法"><Icon><rect x="1" y="0" width="15" height="14" rx="2" fill="#f04a14" transform="rotate(-8 8 8)" /><path d="M12.500 3.500C9 2 4.500 2.500 5 5c.5 2 7 1 7 3.500 0 2.300-5 2.500-8 1" fill="none" stroke="#fff" strokeWidth="2.200" /></Icon></TrayButton>
          <TrayButton $w={22} aria-label="显示隐藏的图标"><svg width="8" height="5" viewBox="0 0 8 5"><path d="M0 4.500h8L4 .5z" fill="#fff" /></svg></TrayButton>
          <TrayButton aria-label="程序"><Icon size={16}><rect width="17" height="17" fill="#bfc1c3" /></Icon></TrayButton>
          <TrayButton aria-label="方块"><Icon size={16}><circle cx="8.500" cy="8.500" r="8" fill="#1c1e22" /><path d="M2.500 7L5 4.500l3.500 3 3.500-3L14.500 7M6.500 2.500L8.500 4l2-1.500M6.500 15V10L3.500 8v3M10.500 15V10l3-2v3" fill="none" stroke="#fff" strokeWidth="1.400" /></Icon></TrayButton>
          <TrayButton aria-label="V 客户端"><Icon size={16}><circle cx="8.500" cy="8.500" r="8" fill="#2f9ad8" /><path d="M3.500 5l3 .5.8 5L12 4h2.500L8 13.500H6.200L5 6.500z" fill="#fff" /></Icon></TrayButton>
          <TrayButton aria-label="网络"><svg width="16" height="13" viewBox="0 0 16 13"><path d="M1.500 13v-3M4.500 13V9M7.500 13V7M10.500 13V4M13.500 13V1" stroke="#fff" strokeWidth="2" /></svg></TrayButton>
          <TrayButton aria-label="音量"><svg width="14" height="14" viewBox="0 0 14 14"><path d="M1 5h2l4-4v12L3 9H1z" fill="#fff" /><path d="M9 4.500q1.500 2.500 0 5M11 2.500q3 4.500 0 9" fill="none" stroke="#fff" /></svg></TrayButton>
          <Clock>10:25</Clock>
          <ShowDesktop aria-label="显示桌面" />
        </Tray>
      </Taskbar>

      <InputBar>
        <svg width="24" height="24" viewBox="0 0 24 24"><rect x="1" y="7" width="22" height="10" rx="1" fill="none" stroke="#0d9ee8" strokeWidth="2" /><path d="M12 0v24" stroke="#0d9ee8" strokeWidth="2" /></svg>
        <svg width="12" height="16" viewBox="0 0 12 16"><circle cx="2.500" cy="4" r="1.400" fill="#ccc" /><path d="M9.500 9.500c3 0 3 4-.5 5.500 1-1.500 1-2 .3-2.500-1.600-.6-1.300-3 .2-3z" fill="#ccc" /></svg>
        <HalfWidth>半</HalfWidth>
        <svg width="20" height="18" viewBox="0 0 20 18"><path d="M6 0c1 3.500 7 3.500 8 0l3 1.500L20 7l-3.500 1.500V18h-13V8.500L0 7l3-5.500z" fill="#ccc" /></svg>
      </InputBar>
    </Window>
  );
}
